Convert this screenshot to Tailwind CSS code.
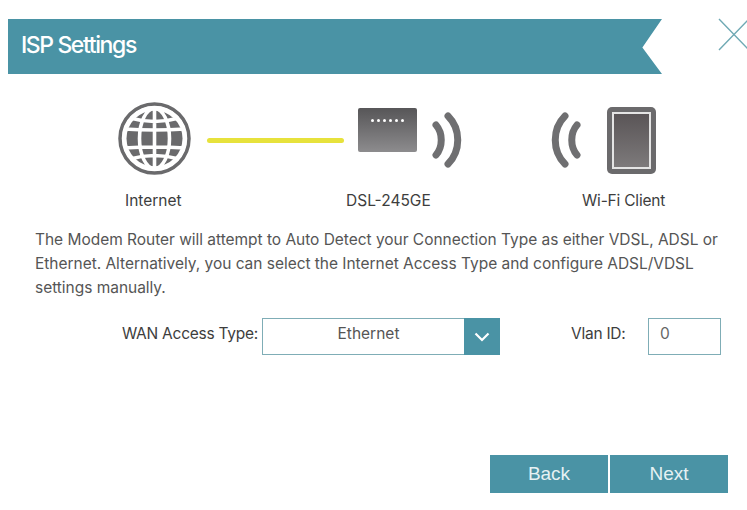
<!DOCTYPE html>
<html><head><meta charset="utf-8"><script src="https://cdn.jsdelivr.net/npm/@tailwindcss/browser@4"></script></head>
<body class="bg-white">
<div class="relative w-[747px] h-[510px] overflow-hidden bg-white pt-[19px] font-['Inter','Liberation_Sans',sans-serif] text-[#4a4a4a]">
  <svg class="absolute left-[718px] top-[18px]" width="32" height="33" viewBox="0 0 32 33" fill="none" stroke="#6fa9b4" stroke-width="1.4"><path d="M1 1 L31 32 M31 1 L1 32"/></svg>
  <div class="ml-2 w-[654px] h-[55px] bg-[#4a93a5] [clip-path:polygon(0_0,100%_0,97%_52%,100%_100%,0_100%)] flex items-center pl-[13px]">
    <span class="text-white text-[23px] font-medium tracking-[-1.4px] pb-[3px]">ISP Settings</span>
  </div>

  <div class="flex mt-[27px] h-[84px] pl-[116px]">
    <svg width="78" height="76" viewBox="0 0 78 76" fill="none" stroke="#6a6a6c">
      <circle cx="38.5" cy="37.5" r="34.5" stroke-width="3.5"/>
      <circle cx="38.5" cy="37.5" r="28" fill="#6a6a6c" stroke="none"/>
      <g stroke="#fff" stroke-width="3.6">
        <ellipse cx="38.5" cy="37.5" rx="15" ry="30"/>
        <path d="M38.5 6V69M8 28 Q38.5 30 69 28M8 47 Q38.5 45 69 47M14 17 Q38.5 24 63 17M14 58 Q38.5 51 63 58" />
      </g>
      <circle cx="38.5" cy="37.5" r="30.5" stroke="#fff" stroke-width="3.5"/>
    </svg>
    <div class="w-[137px] h-[5px] rounded-full bg-[#e7e23c] mt-[37px] ml-[13px]"></div>
    <div class="ml-[14px] mt-[7px] w-[59px] h-[44px] rounded-[2px] bg-gradient-to-b from-[#575658] to-[#8d8c8e] flex justify-center gap-[3px] pt-[11px]">
      <span class="w-[3px] h-[3px] rounded-full bg-white"></span><span class="w-[3px] h-[3px] rounded-full bg-white"></span><span class="w-[3px] h-[3px] rounded-full bg-white"></span><span class="w-[3px] h-[3px] rounded-full bg-white"></span><span class="w-[3px] h-[3px] rounded-full bg-white"></span><span class="w-[3px] h-[3px] rounded-full bg-white"></span>
    </div>
    <svg class="ml-[15px] mt-[11px]" width="32" height="56" viewBox="0 0 32 56" fill="none" stroke="#6f6f71" stroke-width="7" stroke-linecap="round">
      <path d="M4 13 C11 21 11 35 4 43"/>
      <path d="M16 4 C29 17 29 39 16 52"/>
    </svg>
    <svg class="ml-[85px] mt-[11px]" width="32" height="56" viewBox="0 0 32 56" fill="none" stroke="#6f6f71" stroke-width="7" stroke-linecap="round">
      <path d="M28 13 C21 21 21 35 28 43"/>
      <path d="M16 4 C3 17 3 39 16 52"/>
    </svg>
    <div class="ml-[26px] mt-[6px] w-[49px] h-[67px] rounded-[5px] bg-[#6b6a6c] p-[5px]">
      <div class="w-full h-full border-2 border-[#e4e4e4] bg-gradient-to-b from-[#5a5557] to-[#7d7a7b]"></div>
    </div>
  </div>

  <div class="relative h-[22px] mt-[4px] text-[15.5px] text-[#3d3d3d]">
    <span class="absolute left-[125px] top-0">Internet</span>
    <span class="absolute left-[346px] top-0">DSL-245GE</span>
    <span class="absolute left-[582px] top-0 tracking-[-0.2px]">Wi-Fi Client</span>
  </div>

  <p class="ml-[35px] mt-[17px] w-[705px] text-[15.5px] tracking-[-0.03px] leading-[24px] text-[#555]">The Modem Router will attempt to Auto Detect your Connection Type as either VDSL, ADSL or<br>Ethernet. Alternatively, you can select the Internet Access Type and configure ADSL/VDSL<br>settings manually.</p>

  <div class="flex items-center mt-[18px] h-[37px] text-[15.5px] tracking-[-0.25px] text-[#3d3d3d]">
    <span class="w-[258px] text-right pb-[5px]">WAN Access Type:</span>
    <div class="ml-[4px] w-[238px] h-[37px] flex border border-[#7fadb6]">
      <div class="flex-1 text-center pl-[10px] text-[15.5px] tracking-normal text-[#555] leading-[29px]">Ethernet</div>
      <div class="w-[36px] -my-px -mr-px bg-[#4a93a5] flex items-center justify-center">
        <svg width="16" height="10" viewBox="0 0 16 10" fill="none" stroke="#fff" stroke-width="2.2"><path d="M1.5 1.5 L8 8 L14.5 1.5"/></svg>
      </div>
    </div>
    <span class="ml-[71px] w-[55px] pb-[5px] whitespace-nowrap">Vlan ID:</span>
    <div class="ml-[22px] w-[73px] h-[37px] border border-[#7fadb6] pl-[11px] text-[15.5px] text-[#666] leading-[29px]">0</div>
  </div>

  <div class="flex gap-[2px] ml-[490px] mt-[100px] font-['Liberation_Sans',sans-serif] text-[19px] text-[#e6f1f3]">
    <div class="w-[118px] h-[38px] bg-[#4a93a5] flex items-center justify-center">Back</div>
    <div class="w-[118px] h-[38px] bg-[#4a93a5] flex items-center justify-center">Next</div>
  </div>
</div>
</body></html>
